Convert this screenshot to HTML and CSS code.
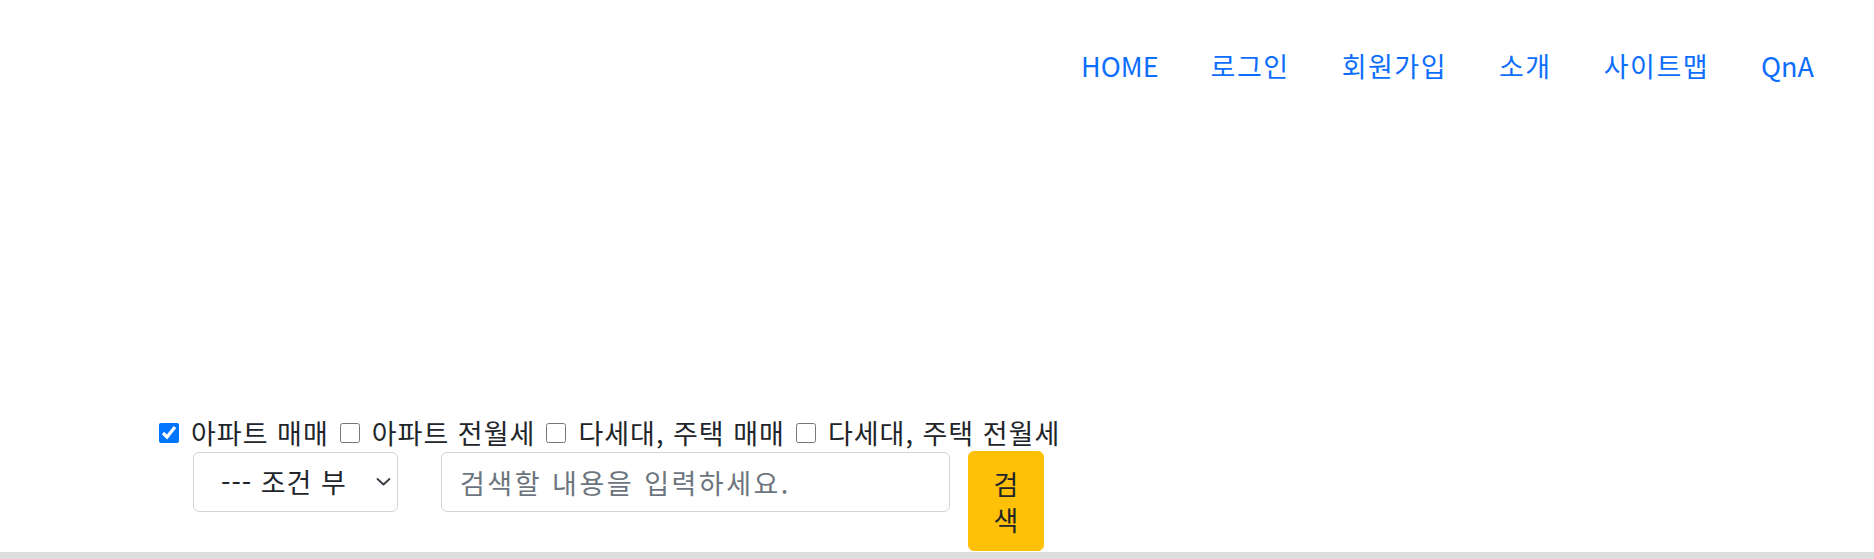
FILE: index.html
```html
<!DOCTYPE html>
<html lang="ko">
<head>
<meta charset="utf-8">
<title>부동산 검색</title>
<link rel="stylesheet" href="styles.css">
</head>
<body>
<header class="site-header">
  <nav class="gnb">
    <a class="gnb-link gnb-link-en" href="#">HOME</a>
    <a class="gnb-link" href="#">로그인</a>
    <a class="gnb-link" href="#">회원가입</a>
    <a class="gnb-link" href="#">소개</a>
    <a class="gnb-link" href="#">사이트맵</a>
    <a class="gnb-link gnb-link-en" href="#">QnA</a>
  </nav>
</header>
<div class="hero"></div>
<section class="search">
  <div class="types">
    <label class="type"><input class="type-check" type="checkbox" checked><span>아파트 매매</span></label>
    <label class="type"><input class="type-check" type="checkbox"><span>아파트 전월세</span></label>
    <label class="type"><input class="type-check" type="checkbox"><span>다세대, 주택 매매</span></label>
    <label class="type"><input class="type-check" type="checkbox"><span>다세대, 주택 전월세</span></label>
  </div>
  <form class="search-form" onsubmit="return false">
    <div class="select-wrap">
      <select class="cond-select">
        <option>--- 조건 부</option>
      </select>
      <svg class="chevron" width="15" height="8" viewBox="0 0 15 8" aria-hidden="true"><path d="M1.5 1 7.5 6.5 13.5 1" fill="none" stroke="#343a40" stroke-width="1.8" stroke-linecap="round" stroke-linejoin="round"/></svg>
    </div>
    <input class="keyword" type="text" placeholder="검색할 내용을 입력하세요.">
    <button class="search-btn" type="submit">검색</button>
  </form>
</section>
<div class="band"></div>
</body>
</html>
```
FILE: styles.css
```css
* { box-sizing: border-box; }

html, body {
  margin: 0;
  padding: 0;
  background: #fff;
}

body {
  font-family: "Noto Sans CJK KR", "Noto Sans", sans-serif;
  font-size: 27px;
  line-height: 36px;
  letter-spacing: 1px;
  color: #212529;
  overflow: hidden;
}

.site-header {
  padding-top: 48px;
}

.gnb {
  display: flex;
  justify-content: flex-end;
  padding-right: 34px;
}

.gnb-link {
  padding: 0 26px;
  color: #0d6efd;
  text-decoration: none;
  line-height: 36px;
  letter-spacing: 1.5px;
}

.gnb-link-en {
  letter-spacing: 0;
}

.hero {
  height: 331px;
}

.search {
  padding-left: 159px;
}

.types {
  display: flex;
  align-items: center;
  gap: 11px;
  height: 36px;
}

.type {
  display: inline-flex;
  align-items: center;
  gap: 12px;
  white-space: nowrap;
}

.type-check {
  width: 20px;
  height: 20px;
  margin: 0;
}

.search-form {
  display: flex;
  align-items: flex-start;
  padding-left: 34px;
}

.select-wrap {
  position: relative;
  margin-top: 1px;
  width: 205px;
}

.cond-select {
  display: block;
  width: 205px;
  height: 60px;
  padding: 0 40px 0 27px;
  font: inherit;
  letter-spacing: 1px;
  color: #212529;
  background: #fff;
  border: 1px solid #ced4da;
  border-radius: 6px;
  appearance: none;
  -webkit-appearance: none;
}

.chevron {
  position: absolute;
  right: 7px;
  top: 26px;
  pointer-events: none;
}

.keyword {
  margin-left: 43px;
  margin-top: 1px;
  width: 509px;
  height: 60px;
  padding: 0 18px;
  font: inherit;
  letter-spacing: 2.5px;
  color: #212529;
  border: 1px solid #ced4da;
  border-radius: 6px;
}

.keyword::placeholder {
  color: #6c757d;
}

.search-btn {
  margin-left: 18px;
  width: 76px;
  height: 100px;
  padding: 14px 16px;
  font: inherit;
  line-height: 36px;
  color: #212529;
  background: #ffc107;
  border: 1px solid #ffc107;
  border-radius: 6px;
}

.band {
  margin-top: 1px;
  height: 20px;
  background: #dedede;
}
```
